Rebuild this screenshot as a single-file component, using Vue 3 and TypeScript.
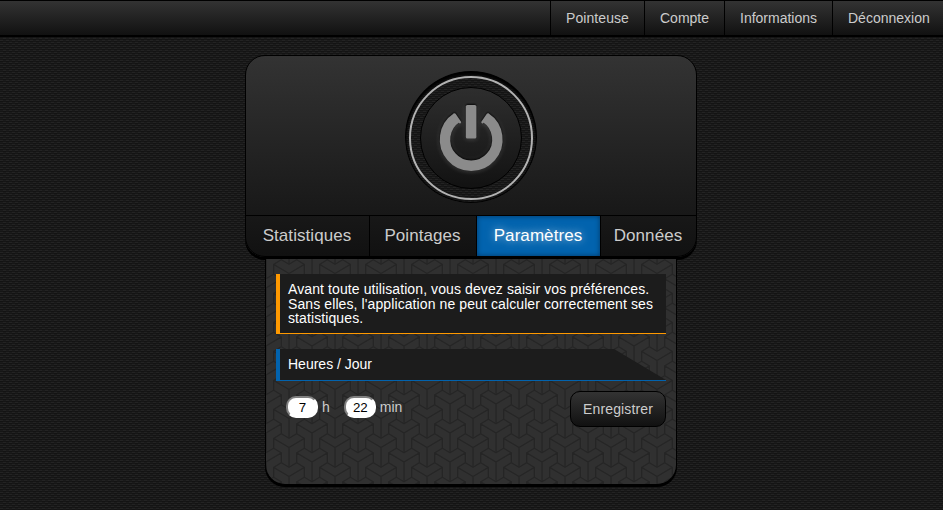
<script setup lang="ts">
interface Tab {
  label: string
  key: string
  active?: boolean
}

const menu: string[] = ['Pointeuse', 'Compte', 'Informations', 'Déconnexion']
const tabs: Tab[] = [
  { label: 'Statistiques', key: 'stats' },
  { label: 'Pointages', key: 'clock' },
  { label: 'Paramètres', key: 'settings', active: true },
  { label: 'Données', key: 'data' },
]
const hours = '7'
const minutes = '22'
</script>

<template>
  <div class="page carbon">
    <nav class="topbar">
      <a v-for="item in menu" :key="item" class="menu-item">{{ item }}</a>
    </nav>

    <main class="content">
      <header class="head">
        <div class="hero">
          <div class="dial carbon">
            <div class="ring">
              <div class="power">
                <svg class="glyph" viewBox="0 0 100 100" width="100" height="100">
                  <path d="M35.6 28.6 A26.2 26.2 0 1 0 64.4 28.6" transform="translate(0.2 1)" fill="none" stroke="#8b8b8b" stroke-width="10.4" />
                  <path d="M33.6 26.4 L38.9 34.2 M66.8 26.4 L61.5 34.2" fill="none" stroke="#8b8b8b" stroke-width="2.4" stroke-linecap="round" />
                  <rect x="44.8" y="17" width="10.6" height="33.6" rx="1.6" fill="#8b8b8b" />
                </svg>
              </div>
            </div>
          </div>
        </div>
        <div class="tabs">
          <a v-for="tab in tabs" :key="tab.key" class="tab" :class="[tab.key, { active: tab.active }]">{{ tab.label }}</a>
        </div>
      </header>

      <section class="panel">
        <p class="notice"><span class="line">Avant toute utilisation, vous devez saisir vos préférences.</span><span class="line">Sans elles, l'application ne peut calculer correctement ses</span><span class="line">statistiques.</span></p>
        <h2 class="title"><span class="title-text">Heures / Jour</span></h2>
        <form class="form" @submit.prevent>
          <div class="fields">
            <input class="num" type="text" :value="hours"><label class="unit">h</label>
            <input class="num second" type="text" :value="minutes"><label class="unit">min</label>
          </div>
          <button class="save" type="submit">Enregistrer</button>
        </form>
      </section>
    </main>
  </div>
</template>

<style>
body {
  margin: 0;
  background: #1a1a1a;
  overflow: hidden;
}
</style>

<style scoped>
* {
  box-sizing: border-box;
}

.page {
  height: 510px;
  overflow: hidden;
  font-family: "Liberation Sans", Arial, sans-serif;
  font-size: 14px;
  color: #ccc;
}

.carbon {
  background-color: #1a1a1a;
  background-image: url("data:image/svg+xml,%3Csvg xmlns='http://www.w3.org/2000/svg' width='6' height='4' shape-rendering='crispEdges'%3E%3Crect width='6' height='4' fill='%231b1b1b'/%3E%3Cpath d='M0 0h3v1H0zM3 2h3v1H3z' fill='%23232323'/%3E%3Cpath d='M0 1h3v1H0zM3 3h3v1H3z' fill='%23131313'/%3E%3Cpath d='M3 1h3v1H3zM0 3h3v1H0z' fill='%23161616'/%3E%3C/svg%3E");
}

.topbar {
  display: flex;
  justify-content: flex-end;
  height: 37px;
  border-top: 1px solid #000;
  border-bottom: 2px solid #000;
  background: linear-gradient(#333, #111);
}

.menu-item {
  padding: 0 0 0 15px;
  border-left: 1px solid #000;
  line-height: 34px;
}

.menu-item:first-child {
  width: 94px;
  letter-spacing: 0.08px;
}

.menu-item:nth-child(2) {
  width: 80px;
}

.menu-item:nth-child(3) {
  width: 108px;
}

.menu-item:last-child {
  width: 111px;
}

.content {
  width: 452px;
  margin: 18px 0 0 245px;
}

.head {
  height: 202px;
  border: 1px solid #000;
  border-radius: 20px;
  background: linear-gradient(#333, #111);
  box-shadow: 0 3px 0 #000;
  overflow: hidden;
}

.hero {
  display: flex;
  justify-content: center;
  height: 160px;
  padding-top: 15px;
  border-bottom: 1px solid #000;
}

.dial {
  display: flex;
  justify-content: center;
  width: 132px;
  height: 132px;
  padding-top: 5px;
  border-radius: 50%;
  box-shadow: inset 0 3px 3px 1px #000, inset 0 0 1px 1px #000;
}

.ring {
  display: flex;
  align-items: center;
  justify-content: center;
  width: 124px;
  height: 124px;
  border: 2px solid #b2b2b2;
  border-radius: 50%;
}

.power {
  width: 102px;
  height: 102px;
  border: 1px solid #000;
  border-radius: 50%;
  background: linear-gradient(#2e2e2e, #121212);
}

.glyph {
  display: block;
  filter: drop-shadow(0 -1px 1px #000) drop-shadow(0 1px 2px rgba(255, 255, 255, 0.16));
}

.tabs {
  display: flex;
  height: 40px;
}

.tab {
  width: 124px;
  padding-right: 1px;
  border-right: 1px solid #000;
  font-size: 17px;
  letter-spacing: 0.07px;
  line-height: 39px;
  text-align: center;
}

.clock {
  width: 107px;
}

.data {
  width: 95px;
  border-right: 0;
}

.active {
  color: #fff;
  background: #0263ae;
  box-shadow: inset 0 0 5px rgba(0, 25, 50, 0.6);
  text-shadow: 0 0 8px rgba(255, 255, 255, 0.7);
}

.panel {
  position: relative;
  width: 412px;
  height: 226px;
  margin: 2px 0 0 20px;
  padding: 15px 10px 0;
  border: 1px solid #000;
  border-top: 0;
  border-radius: 0 0 20px 20px;
  box-shadow: 0 2px 0 #000;
  background: #303030 url("data:image/svg+xml,%3Csvg xmlns='http://www.w3.org/2000/svg' width='46' height='29' viewBox='0 0 46 29'%3E%3Cdefs%3E%3Cpath id='y' d='M-15.33 -9.2L0 0L15.33 -9.2M0 0V19.8M-15.33 0.7V-9.2L-7.67 -13.8L0 -9.2L7.67 -13.8L15.33 -9.2V0.7'/%3E%3C/defs%3E%3Cg fill='none' stroke='%23252525' stroke-width='1.4'%3E%3Cuse href='%23y' x='23' y='14.5'/%3E%3Cuse href='%23y' x='0' y='0'/%3E%3Cuse href='%23y' x='46' y='0'/%3E%3Cuse href='%23y' x='0' y='29'/%3E%3Cuse href='%23y' x='46' y='29'/%3E%3Cuse href='%23y' x='23' y='-14.5'/%3E%3Cuse href='%23y' x='23' y='43.5'/%3E%3C/g%3E%3C/svg%3E") 0 0;
}

.notice {
  height: 60px;
  margin: 0 0 15px;
  padding: 8px 0 0 8px;
  border-left: 4px solid #f90;
  background: linear-gradient(#f90, #f90) bottom / 100% 1px no-repeat #1c1c1c;
  color: #fff;
  line-height: 14.6px;
}

.line {
  display: block;
  letter-spacing: 0.1px;
  white-space: nowrap;
}

.title {
  height: 32px;
  margin: 0 0 10px;
  border-left: 4px solid #0263ae;
  background: linear-gradient(#0263ae, #0263ae) bottom / 100% 1px no-repeat;
  color: #fff;
  font-size: 14px;
  font-weight: normal;
}

.title-text {
  display: block;
  height: 31px;
  padding-left: 8px;
  background: #1c1c1c;
  clip-path: polygon(0 0, 334px 0, 100% 100%, 0 100%);
  line-height: 31px;
}

.form {
  display: flex;
  justify-content: space-between;
  padding-left: 10px;
}

.fields {
  display: flex;
  padding-top: 5px;
}

.num {
  width: 32px;
  height: 22px;
  padding: 0 0 0 1px;
  border: 2px solid;
  border-color: #808080 #fff #fff #808080;
  border-radius: 10px;
  background: #fff;
  color: #000;
  font: 13.33px "Liberation Sans", Arial, sans-serif;
  text-align: center;
}

.unit {
  margin-left: 4px;
  line-height: 22px;
}

.second {
  margin-left: 14px;
}

.save {
  width: 96px;
  height: 36px;
  padding: 0;
  border: 1px solid #000;
  border-radius: 10px;
  background: linear-gradient(#333, #111);
  color: #ccc;
  font: 14px "Liberation Sans", Arial, sans-serif;
  letter-spacing: 0.13px;
}
</style>
